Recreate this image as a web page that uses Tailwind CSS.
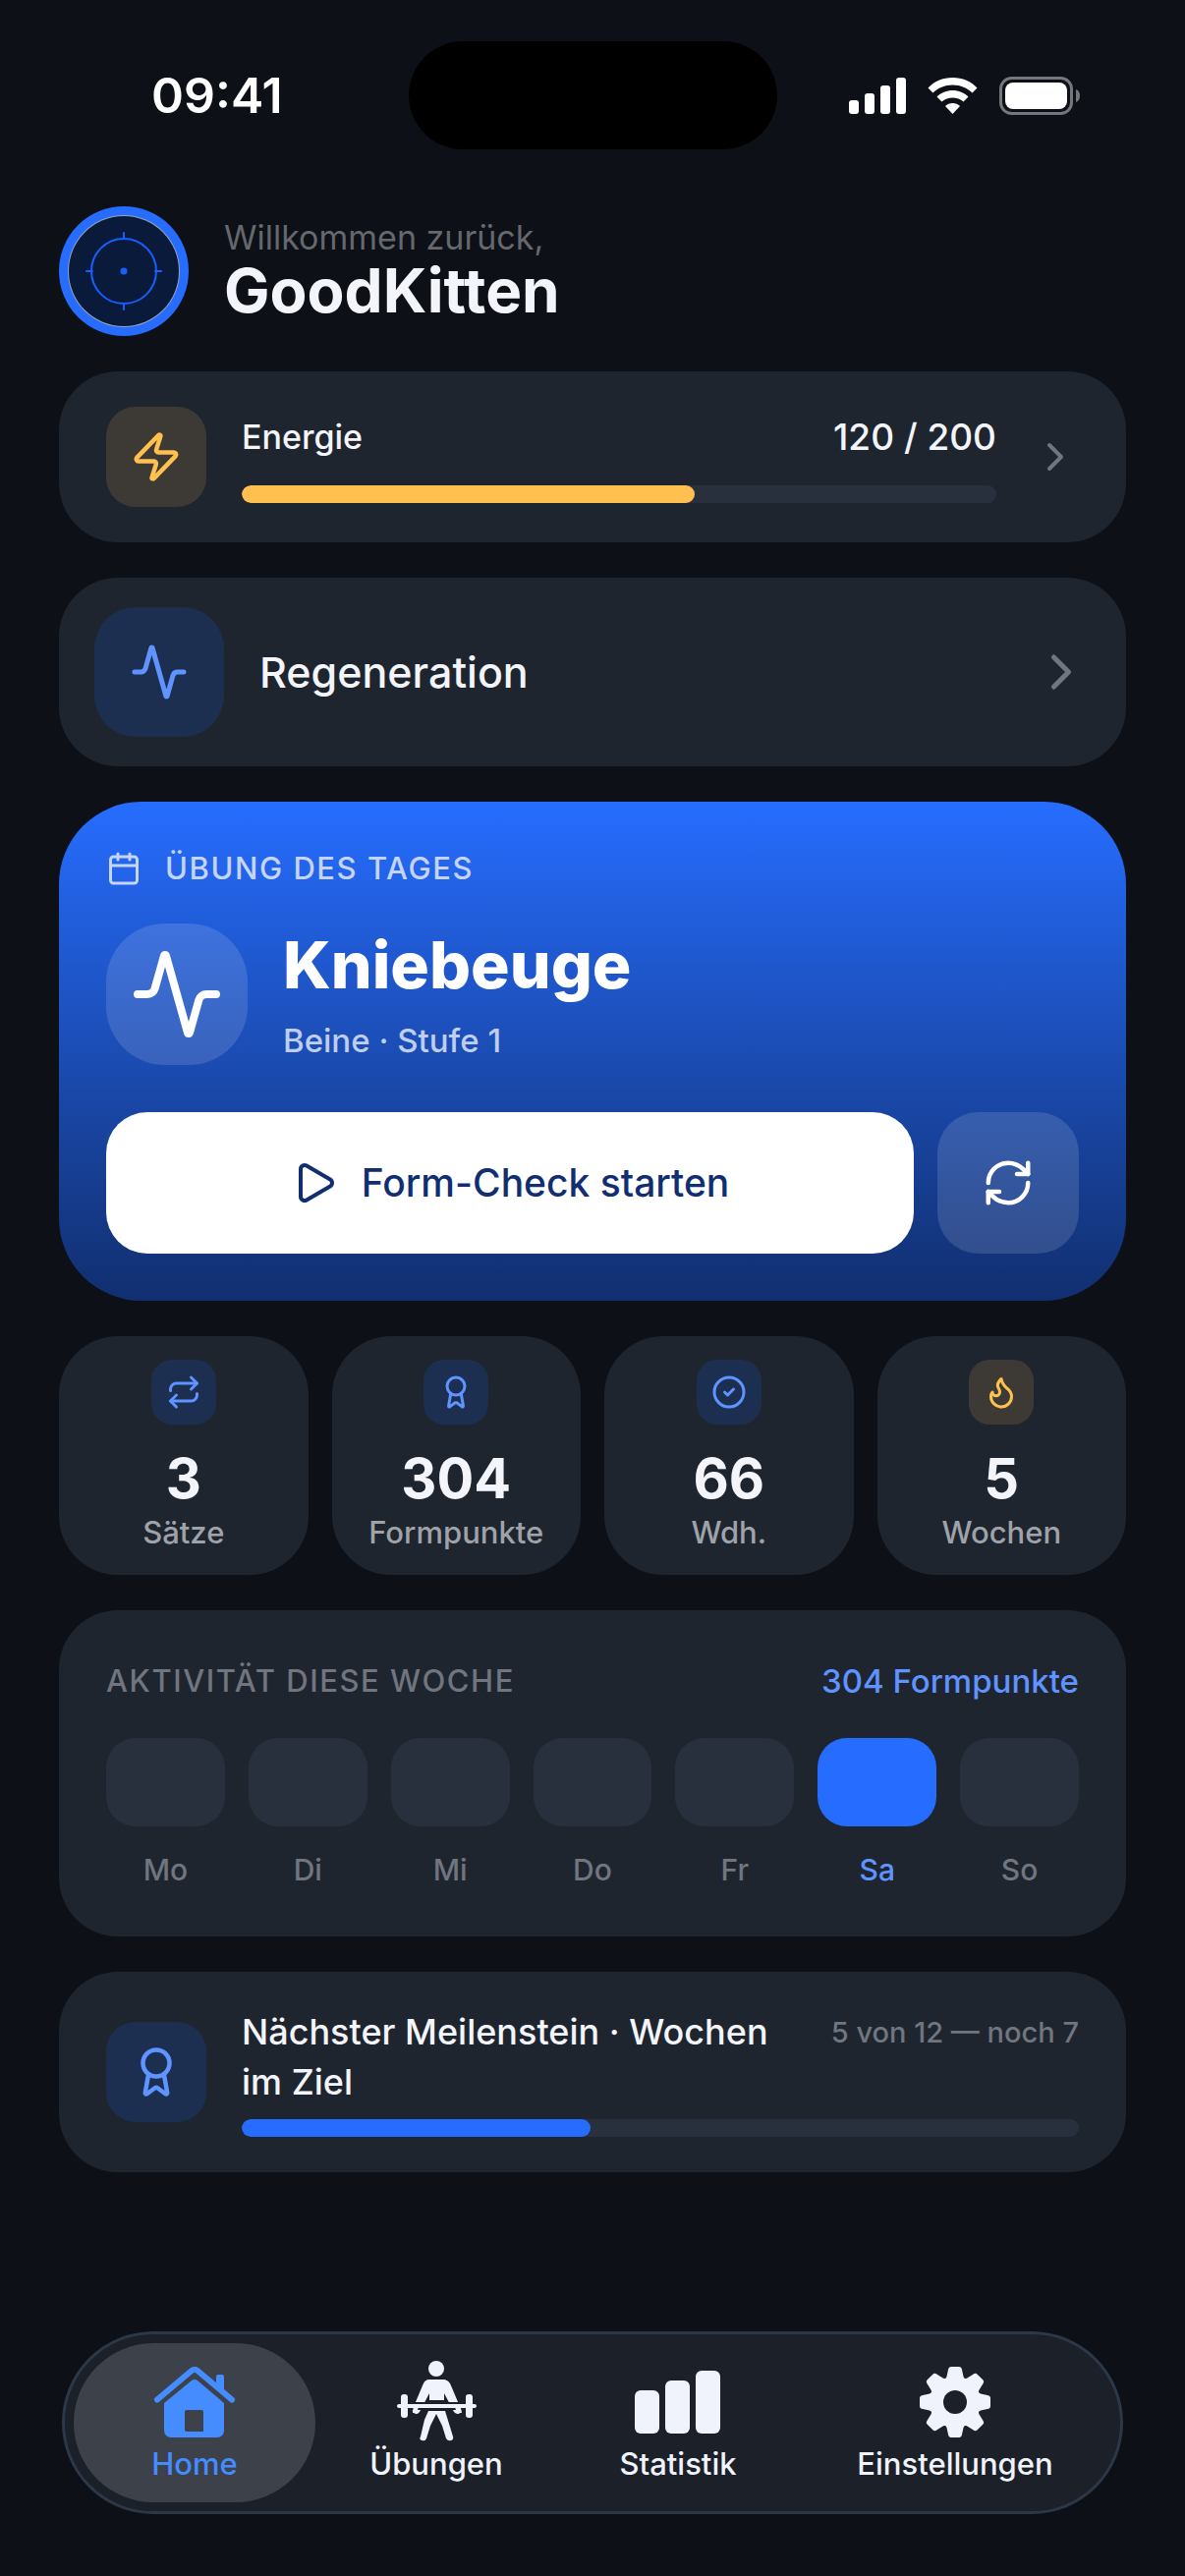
<!DOCTYPE html>
<html lang="de">
<head>
  <meta charset="UTF-8" />
  <meta name="viewport" content="width=device-width, initial-scale=1.0" />
  <title>Home</title>
  <script src="https://cdn.jsdelivr.net/npm/@tailwindcss/browser@4"></script>
</head>
<body class="bg-[#0d1017] min-h-screen flex flex-col font-['Inter',sans-serif] font-medium text-[#f3f5fb]">

  <!-- Statusleiste -->
  <header class="grid grid-cols-3 items-center px-[60px] pt-[42px]">
    <span class="justify-self-start pl-[94px] text-[50px] leading-[54px] font-semibold text-white">09:41</span>
    <div class="justify-self-center w-[375px] h-[110px] rounded-full bg-black"></div>
    <div class="justify-self-end flex items-center gap-[22px] pr-[47px] text-white">
      <svg class="w-[58px] h-[37px]" viewBox="0 0 58 37" fill="currentColor"><rect y="23" width="10" height="14" rx="3"/><rect x="16" y="16" width="10" height="21" rx="3"/><rect x="32" y="8" width="10" height="29" rx="3"/><rect x="48" width="10" height="37" rx="3"/></svg>
      <svg class="w-[51px] h-[37px]" viewBox="0 0 51 37" fill="currentColor"><path d="M25.5 0C35.5 0 44.5 4 50.5 10.5L45.500 15.500C40.500 10.500 33.500 7.500 25.500 7.500S10.500 10.500 5.500 15.500L.5 10.500C6.500 4 15.500 0 25.500 0Z"/><path d="M25.500 13C31.500 13 37.500 15.500 41.500 19.500L36.500 24.500C33.500 22 29.500 20.500 25.500 20.500S17.500 22 14.500 24.500L9.500 19.500C13.500 15.500 19.500 13 25.500 13Z"/><path d="M25.500 26C28.500 26 31 27 33 29L25.500 37L18 29C20 27 22.500 26 25.500 26Z"/></svg>
      <svg class="w-[82px] h-[39px]" viewBox="0 0 82 39"><rect x="1.500" y="1.500" width="72" height="36" rx="11" fill="none" stroke="#75777b" stroke-width="3"/><rect x="6" y="6" width="63" height="27" rx="8" fill="#fff"/><path d="M78 13c3 1 4 3.500 4 6.500S81 25 78 26z" fill="#75777b"/></svg>
    </div>
  </header>

  <main class="flex flex-col gap-9 px-[60px] pt-[58px]">

    <!-- Begrüßung -->
    <section class="flex items-center gap-9">
      <svg class="w-[132px] h-[132px]" viewBox="0 0 132 132"><circle cx="66" cy="66" r="66" fill="#266dff"/><circle cx="66" cy="66" r="57" fill="#9aa3b5"/><circle cx="66" cy="66" r="56" fill="#0a1a3a"/><g fill="none" stroke="#1560ff" stroke-width="2"><circle cx="66" cy="66" r="33"/><path d="M66 27v6M66 99v6M28 66h6M98 66h6" stroke-linecap="round"/></g><circle cx="66" cy="66" r="3.500" fill="#1560ff"/></svg>
      <div>
        <p class="text-[34px] leading-[40px] font-normal text-[#65686d]">Willkommen zurück,</p>
        <h1 class="text-[62px] leading-[68px] font-bold">GoodKitten</h1>
      </div>
    </section>

    <!-- Energie -->
    <a href="#energie" class="flex items-center gap-9 rounded-[60px] bg-[#1e252f] px-12 py-9">
      <span class="flex size-[102px] items-center justify-center rounded-[30px] bg-[#3d3a35] text-[#ffc04f]">
        <svg class="size-[54px]" viewBox="0 0 24 24" fill="none" stroke="currentColor" stroke-width="2" stroke-linecap="round" stroke-linejoin="round"><path d="M4 14a1 1 0 0 1-.78-1.630l9.900-10.200a.5.5 0 0 1 .86.46l-1.920 6.020A1 1 0 0 0 13 10h7a1 1 0 0 1 .78 1.630l-9.900 10.200a.5.5 0 0 1-.86-.46l1.920-6.020A1 1 0 0 0 11 14z"/></svg>
      </span>
      <span class="flex flex-1 flex-col gap-6">
        <span class="flex items-center justify-between leading-[51px]">
          <span class="text-[34px]">Energie</span>
          <span class="text-[37px]">120 / 200</span>
        </span>
        <span class="block h-[18px] overflow-hidden rounded-full bg-[#28303e]"><span class="block h-full rounded-full bg-[#ffc04f]" style="width: 60%"></span></span>
      </span>
      <svg class="size-12 text-[#70757f]" viewBox="0 0 24 24" fill="none" stroke="currentColor" stroke-width="2" stroke-linecap="round" stroke-linejoin="round"><path d="m9 18 6-6-6-6"/></svg>
    </a>

    <!-- Regeneration -->
    <a href="#regeneration" class="flex items-center gap-9 rounded-[60px] bg-[#1e252f] px-9 py-[30px]">
      <span class="flex size-[132px] items-center justify-center rounded-[42px] bg-[#1d2f50] text-[#5f93ff]">
        <svg class="size-[60px]" viewBox="0 0 24 24" fill="none" stroke="currentColor" stroke-width="2" stroke-linecap="round" stroke-linejoin="round"><path d="M22 12h-2.480a2 2 0 0 0-1.930 1.460l-2.350 8.360a.25.25 0 0 1-.48 0L9.240 2.180a.25.25 0 0 0-.48 0l-2.350 8.360A2 2 0 0 1 4.490 12H2"/></svg>
      </span>
      <span class="flex-1 text-[43px] leading-[54px]">Regeneration</span>
      <svg class="size-[60px] text-[#70757f]" viewBox="0 0 24 24" fill="none" stroke="currentColor" stroke-width="2" stroke-linecap="round" stroke-linejoin="round"><path d="m9 18 6-6-6-6"/></svg>
    </a>

    <!-- Übung des Tages -->
    <section class="flex flex-col rounded-[84px] bg-linear-to-b from-[#266dff] to-[#112f70] p-12">
      <div class="flex items-center gap-6 text-[#c4d4fb]">
        <svg class="size-9" viewBox="0 0 24 24" fill="none" stroke="currentColor" stroke-width="2" stroke-linecap="round" stroke-linejoin="round"><path d="M8 2v4M16 2v4M3 10h18"/><rect width="18" height="18" x="3" y="4" rx="2"/></svg>
        <h2 class="text-[31px] leading-10 tracking-wider">ÜBUNG DES TAGES</h2>
      </div>
      <div class="mt-9 flex items-center gap-9">
        <span class="flex size-36 items-center justify-center rounded-[60px] bg-white/13 text-white">
          <svg class="size-24" viewBox="0 0 24 24" fill="none" stroke="currentColor" stroke-width="2" stroke-linecap="round" stroke-linejoin="round"><path d="M22 12h-2.480a2 2 0 0 0-1.930 1.460l-2.350 8.360a.25.25 0 0 1-.48 0L9.240 2.180a.25.25 0 0 0-.48 0l-2.350 8.360A2 2 0 0 1 4.490 12H2"/></svg>
        </span>
        <div>
          <p class="text-[66px] leading-[78px] font-extrabold text-white">Kniebeuge</p>
          <p class="mt-4 text-[33px] leading-[44px] text-[#bfcdee]">Beine · Stufe 1</p>
        </div>
      </div>
      <div class="mt-12 flex gap-6">
        <button type="button" class="flex h-36 flex-1 items-center justify-center gap-6 rounded-[42px] bg-white text-[#112f70]">
          <svg class="size-12" viewBox="0 0 24 24" fill="none" stroke="currentColor" stroke-width="2" stroke-linecap="round" stroke-linejoin="round"><path d="M5 5a2 2 0 0 1 3.008-1.728l11.997 6.998a2 2 0 0 1 .003 3.458l-12 7A2 2 0 0 1 5 19z"/></svg>
          <span class="text-[39px] leading-[54px]">Form-Check starten</span>
        </button>
        <button type="button" aria-label="Andere Übung" class="flex size-36 items-center justify-center rounded-[42px] bg-white/13 text-white">
          <svg class="size-[54px]" viewBox="0 0 24 24" fill="none" stroke="currentColor" stroke-width="2" stroke-linecap="round" stroke-linejoin="round"><path d="M3 12a9 9 0 0 1 9-9 9.750 9.750 0 0 1 6.740 2.740L21 8"/><path d="M21 3v5h-5"/><path d="M21 12a9 9 0 0 1-9 9 9.750 9.750 0 0 1-6.740-2.740L3 16"/><path d="M8 16H3v5"/></svg>
        </button>
      </div>
    </section>

    <!-- Kennzahlen -->
    <section class="grid grid-cols-4 gap-6 text-center">
      <div class="flex flex-col items-center rounded-[60px] bg-[#1e252f] py-6">
        <span class="flex size-[66px] items-center justify-center rounded-[21px] bg-[#1d2f50] text-[#5f93ff]">
          <svg class="size-9" viewBox="0 0 24 24" fill="none" stroke="currentColor" stroke-width="2" stroke-linecap="round" stroke-linejoin="round"><path d="m17 2 4 4-4 4"/><path d="M3 11v-1a4 4 0 0 1 4-4h14"/><path d="m7 22-4-4 4-4"/><path d="M21 13v1a4 4 0 0 1-4 4H3"/></svg>
        </span>
        <p class="mt-5 text-[56px] leading-[70px] font-bold">3</p>
        <p class="text-[31px] leading-[39px] text-[#9fa3a9]">Sätze</p>
      </div>
      <div class="flex flex-col items-center rounded-[60px] bg-[#1e252f] py-6">
        <span class="flex size-[66px] items-center justify-center rounded-[21px] bg-[#1d2f50] text-[#5f93ff]">
          <svg class="size-9" viewBox="0 0 24 24" fill="none" stroke="currentColor" stroke-width="2" stroke-linecap="round" stroke-linejoin="round"><path d="m15.477 12.890 1.515 8.526a.5.5 0 0 1-.81.47l-3.580-2.687a1 1 0 0 0-1.197 0l-3.586 2.686a.5.5 0 0 1-.81-.469l1.514-8.526"/><circle cx="12" cy="8" r="6"/></svg>
        </span>
        <p class="mt-5 text-[56px] leading-[70px] font-bold">304</p>
        <p class="text-[31px] leading-[39px] text-[#9fa3a9]">Formpunkte</p>
      </div>
      <div class="flex flex-col items-center rounded-[60px] bg-[#1e252f] py-6">
        <span class="flex size-[66px] items-center justify-center rounded-[21px] bg-[#1d2f50] text-[#5f93ff]">
          <svg class="size-9" viewBox="0 0 24 24" fill="none" stroke="currentColor" stroke-width="2" stroke-linecap="round" stroke-linejoin="round"><circle cx="12" cy="12" r="10"/><path d="m9 12 2 2 4-4"/></svg>
        </span>
        <p class="mt-5 text-[56px] leading-[70px] font-bold">66</p>
        <p class="text-[31px] leading-[39px] text-[#9fa3a9]">Wdh.</p>
      </div>
      <div class="flex flex-col items-center rounded-[60px] bg-[#1e252f] py-6">
        <span class="flex size-[66px] items-center justify-center rounded-[21px] bg-[#3d3a35] text-[#ffc04f]">
          <svg class="size-9" viewBox="0 0 24 24" fill="none" stroke="currentColor" stroke-width="2" stroke-linecap="round" stroke-linejoin="round"><path d="M8.5 14.5A2.500 2.500 0 0 0 11 12c0-1.380-.5-2-1-3-1.072-2.143-.224-4.054 2-6 .5 2.500 2 4.900 4 6.500 2 1.600 3 3.500 3 5.500a7 7 0 1 1-14 0c0-1.153.433-2.294 1-3a2.500 2.500 0 0 0 2.500 2.500z"/></svg>
        </span>
        <p class="mt-5 text-[56px] leading-[70px] font-bold">5</p>
        <p class="text-[31px] leading-[39px] text-[#9fa3a9]">Wochen</p>
      </div>
    </section>

    <!-- Wochenaktivität -->
    <section class="rounded-[60px] bg-[#1e252f] p-12">
      <div class="flex items-center justify-between leading-[48px]">
        <h2 class="text-[31px] tracking-wider text-[#70757f]">AKTIVITÄT DIESE WOCHE</h2>
        <span class="text-[33px] text-[#5f93ff]">304 Formpunkte</span>
      </div>
      <ul class="mt-[34px] grid grid-cols-7 gap-6 text-center text-[30px] leading-[40px] text-[#70757f]">
        <li class="flex flex-col gap-6"><span class="h-[90px] rounded-[30px] bg-[#28303e]"></span>Mo</li>
        <li class="flex flex-col gap-6"><span class="h-[90px] rounded-[30px] bg-[#28303e]"></span>Di</li>
        <li class="flex flex-col gap-6"><span class="h-[90px] rounded-[30px] bg-[#28303e]"></span>Mi</li>
        <li class="flex flex-col gap-6"><span class="h-[90px] rounded-[30px] bg-[#28303e]"></span>Do</li>
        <li class="flex flex-col gap-6"><span class="h-[90px] rounded-[30px] bg-[#28303e]"></span>Fr</li>
        <li class="flex flex-col gap-6 text-[#5f93ff]"><span class="h-[90px] rounded-[30px] bg-[#266dff]"></span>Sa</li>
        <li class="flex flex-col gap-6"><span class="h-[90px] rounded-[30px] bg-[#28303e]"></span>So</li>
      </ul>
    </section>

    <!-- Meilenstein -->
    <section class="flex items-center gap-9 rounded-[60px] bg-[#1e252f] px-12 py-9">
      <span class="flex size-[102px] items-center justify-center rounded-[30px] bg-[#1d2f50] text-[#5f93ff]">
        <svg class="size-[54px]" viewBox="0 0 24 24" fill="none" stroke="currentColor" stroke-width="2" stroke-linecap="round" stroke-linejoin="round"><path d="m15.477 12.890 1.515 8.526a.5.5 0 0 1-.81.47l-3.580-2.687a1 1 0 0 0-1.197 0l-3.586 2.686a.5.5 0 0 1-.81-.469l1.514-8.526"/><circle cx="12" cy="8" r="6"/></svg>
      </span>
      <div class="flex flex-1 flex-col gap-3">
        <div class="flex justify-between gap-9 leading-[51px]">
          <h2 class="text-[36px]">Nächster Meilenstein · Wochen im Ziel</h2>
          <span class="whitespace-nowrap text-[29px] text-[#70757f]">5 von 12 — noch 7</span>
        </div>
        <div class="h-[18px] overflow-hidden rounded-full bg-[#28303e]"><div class="h-full rounded-full bg-[#266dff]" style="width: 41.67%"></div></div>
      </div>
    </section>
  </main>

  <!-- Tab-Leiste -->
  <nav class="mx-[63px] mt-auto mb-[63px] flex rounded-[93px] border-[3px] border-[#2c3747] bg-[#1c2028] p-[9px] text-center text-[31px] leading-9 text-[#f0f3fc]">
    <a href="#home" class="flex h-[162px] flex-[246] flex-col items-center justify-center rounded-[81px] bg-[#3d4149] text-[#448cff]">
      <svg class="size-[84px]" viewBox="15 11 84 84" fill="currentColor"><path d="M19 47.500 54 18q3-2.500 6 0l35 29.500" fill="none" stroke="currentColor" stroke-width="6" stroke-linecap="round"/><path d="M79 34V24q0-2 2-2h4q2 0 2 2v17Z"/><path fill-rule="evenodd" d="M26 51 54 28q3-2 6 0l27 23v28a7 7 0 0 1-7 7H33a7 7 0 0 1-7-7Zm21 9v18q0 2 2 2h17V60q0-2-2-2H49q-2 0-2 2Z"/></svg>
      Home
    </a>
    <a href="#uebungen" class="flex flex-[246] flex-col items-center justify-center">
      <svg class="size-[84px] overflow-visible" viewBox="-2 4 84 84" fill="currentColor"><circle cx="40" cy="9" r="8"/><path d="M33 20h14q5 0 7.500 5l10.500 25q1 3-1.500 4.500T58 53L48 34v7H33v-7L23 53q-2 3-5 1.500T16 50L26.500 25q2-5 6.500-5Z"/><path d="M32 52h17l8 26q1 3-2 4t-5-2L46 67l-6-12-6 12-4 13q-1 3-4.500 2T24 78l4-17Z"/><rect x="0" y="43" width="81" height="8" fill="#1c2028"/><rect x="0" y="45" width="81" height="4" rx="2"/><rect x="4" y="35" width="7" height="24" rx="3"/><rect x="70" y="35" width="7" height="24" rx="3"/><path d="M17 45h6l-3 9h-4zM58 45h6l2 9h-5z"/></svg>
      Übungen
    </a>
    <a href="#statistik" class="flex flex-[246] flex-col items-center justify-center">
      <svg class="h-[84px] w-[88px]" viewBox="0 0 88 84" fill="currentColor"><rect y="27" width="25" height="44" rx="6"/><rect x="31" y="17" width="25" height="54" rx="6"/><rect x="62" y="7" width="25" height="64" rx="6"/></svg>
      Statistik
    </a>
    <a href="#einstellungen" class="flex flex-[318] flex-col items-center justify-center">
      <svg class="size-[84px]" viewBox="-42 -39 84 84" fill="currentColor">
        <defs><path id="zahn" d="M-12-22Q-9-24-8.500-26L-7-33Q-6.500-36-4-36H4Q6.500-36 7-33L8.500-26Q9-24 12-22Z"/></defs>
        <circle r="26"/>
        <use href="#zahn"/><use href="#zahn" transform="rotate(45)"/><use href="#zahn" transform="rotate(90)"/><use href="#zahn" transform="rotate(135)"/><use href="#zahn" transform="rotate(180)"/><use href="#zahn" transform="rotate(225)"/><use href="#zahn" transform="rotate(270)"/><use href="#zahn" transform="rotate(315)"/>
        <circle r="12" fill="#1c2028"/>
      </svg>
      Einstellungen
    </a>
  </nav>
</body>
</html>
